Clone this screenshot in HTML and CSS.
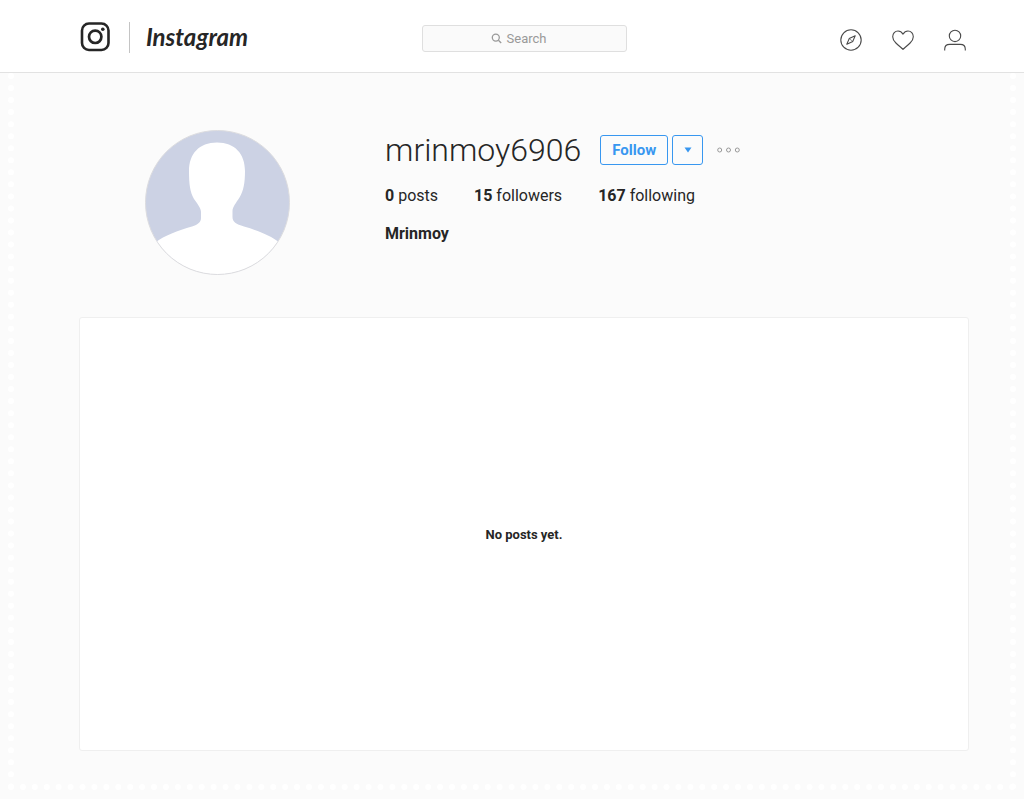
FILE: index.html
```html
<!DOCTYPE html>
<html lang="en">
<head>
    <meta charset="UTF-8">
    <meta name="viewport" content="width=device-width, initial-scale=1.0">
    <title>Mrinmoy (@mrinmoy6906) • Instagram</title>
    <link rel="stylesheet" href="styles.css">
</head>
<body>
    <header class="navbar">
        <a class="brand" href="#">
            <svg class="brand-icon" width="30" height="30" viewBox="0 0 30 30" fill="none" stroke="#262626" aria-hidden="true">
                <rect x="2" y="1.5" width="26.5" height="26.5" rx="7" stroke-width="2.6"/>
                <circle cx="15.2" cy="14.8" r="6.2" stroke-width="2.7"/>
                <circle cx="22.8" cy="7.3" r="1.8" fill="#262626" stroke="none"/>
            </svg>
            <span class="brand-divider"></span>
            <span class="wordmark">Instagram</span>
        </a>
        <div class="search">
            <svg class="search-icon" width="11" height="11" viewBox="0 0 11 11" fill="none" stroke="#999" stroke-width="1.3" aria-hidden="true">
                <circle cx="4.8" cy="4.6" r="3.5"/>
                <path d="M7.4 7.2L10.2 10"/>
            </svg>
            <input type="text" placeholder="Search" aria-label="Search">
        </div>
        <nav class="nav-links">
            <a href="#" aria-label="Explore">
                <svg width="22" height="22" viewBox="0 0 22 22" fill="none" stroke="#4a4a4a" stroke-linejoin="round">
                    <circle cx="11" cy="11" r="10.2" stroke-width="1.1"/>
                    <path d="M15.2 6.8L12.8 12.4L6.8 15.2L9.2 9.6Z" stroke-width="1.1"/>
                    <path d="M9.2 9.6L12.8 12.4" stroke-width="0.6"/>
                </svg>
            </a>
            <a href="#" aria-label="Activity">
                <svg width="22" height="22" viewBox="0 0 22 22" fill="none" stroke="#4a4a4a" stroke-width="1.1" stroke-linejoin="round">
                    <path d="M11 20.3C9.8 19 6.6 16.7 3.9 14C1.9 12 .7 10.2 .7 7.7C.7 4.5 3 2 6 2C8.3 2 9.9 3.2 11 5.1C12.1 3.2 13.7 2 16 2C19 2 21.3 4.5 21.3 7.7C21.3 10.2 20.1 12 18.1 14C15.4 16.7 12.2 19 11 20.3Z"/>
                </svg>
            </a>
            <a href="#" aria-label="Profile">
                <svg width="22" height="22" viewBox="0 0 22 22" fill="none" stroke="#4a4a4a" stroke-width="1.1">
                    <circle cx="11" cy="6.9" r="5.7"/>
                    <path d="M.7 21.5V20.2C.7 17.2 2.7 15.4 5.7 15.4H16.3C19.3 15.4 21.3 17.2 21.3 20.2V21.5"/>
                </svg>
            </a>
        </nav>
    </header>

    <main class="page">
        <section class="profile">
            <svg class="avatar" width="145" height="145" viewBox="0 0 145 145" role="img" aria-label="Profile picture">
                <defs>
                    <clipPath id="avatar-clip"><circle cx="72.5" cy="72.5" r="72"/></clipPath>
                </defs>
                <g clip-path="url(#avatar-clip)">
                    <rect width="145" height="145" fill="#ccd2e4"/>
                    <path fill="#fff" d="M72 12.5C54 12.5 44 24 44 41C44 54 45 62 49 69C52.5 74 56 78 56 82V88C56 92 53 94.5 47 96.5C33 100.5 19 106 11 112V145H134V112C126 106 113 100.5 99 96.5C91 94 87.5 92 87.5 87V81C87.5 77 91 73 94.5 67.5C98.5 61 100 53 100 41C100 24 90 12.5 72 12.5Z"/>
                </g>
                <circle cx="72.5" cy="72.5" r="72" fill="none" stroke="#dcdcdf"/>
            </svg>
            <div class="info">
                <div class="user-row">
                    <h1 class="username">mrinmoy6906</h1>
                    <div class="actions">
                        <button class="btn follow">Follow</button>
                        <button class="btn suggest" aria-label="Similar accounts">
                            <svg width="8" height="6" viewBox="0 0 8 6" fill="#3897f0"><path d="M.5 .5H7.5L4 5.5Z"/></svg>
                        </button>
                    </div>
                    <button class="more" aria-label="Options">
                        <svg width="23" height="6" viewBox="0 0 23 6" fill="none" stroke="#999">
                            <circle cx="2.7" cy="3" r="2"/>
                            <circle cx="11.5" cy="3" r="2"/>
                            <circle cx="20.3" cy="3" r="2"/>
                        </svg>
                    </button>
                </div>
                <ul class="stats">
                    <li><strong>0</strong> posts</li>
                    <li><strong>15</strong> followers</li>
                    <li><strong>167</strong> following</li>
                </ul>
                <h2 class="full-name">Mrinmoy</h2>
            </div>
        </section>

        <section class="posts">
            <p>No posts yet.</p>
        </section>
    </main>
</body>
</html>
```
FILE: styles.css
```css
* {
    box-sizing: border-box;
}
body {
    margin: 0;
    min-height: 100vh;
    background: #fbfbfb;
    color: #262626;
    font-family: Roboto, "Liberation Sans", sans-serif;
    font-size: 16px;
}
h1, h2, p, ul {
    margin: 0;
    padding: 0;
}
button {
    font-family: inherit;
    cursor: pointer;
}
svg {
    display: block;
}

/* Top bar */
.navbar {
    display: grid;
    grid-template-columns: 1fr 205px 1fr;
    align-items: center;
    height: 73px;
    padding: 4px 56px 0 80px;
    background: #fff;
    border-bottom: 1px solid #e2e2e2;
}
.brand {
    display: flex;
    align-items: center;
    padding-bottom: 2px;
    color: #262626;
    text-decoration: none;
}
.brand-divider {
    width: 1px;
    height: 31px;
    margin: 0 16px 0 19px;
    background: #c4c4c4;
}
.wordmark {
    font-family: Lato, sans-serif;
    font-size: 24px;
    font-style: italic;
    font-weight: bold;
    line-height: 30px;
}
.search {
    position: relative;
}
.search input {
    display: block;
    width: 100%;
    height: 27px;
    padding: 0 0 0 5px;
    border: 1px solid #dfdfdf;
    border-radius: 3px;
    background: #fafafa;
    color: #262626;
    font-family: inherit;
    font-size: 13px;
    text-align: center;
}
.search input::placeholder {
    color: #999;
}
.search-icon {
    position: absolute;
    top: 8px;
    left: 69px;
}
.nav-links {
    display: flex;
    justify-content: flex-end;
    gap: 30px;
    padding: 3px 2px 0 0;
}

/* Profile */
.page {
    margin: 0 8px;
    padding: 57px 41px 33px 65px;
    border: 6px dotted #fff;
    border-top: 0;
}
.profile {
    display: grid;
    grid-template-columns: 276px 1fr;
    gap: 30px;
    margin-bottom: 42px;
}
.avatar {
    justify-self: center;
}
.user-row {
    display: flex;
    align-items: center;
    height: 40px;
}
.username {
    margin-right: 19px;
    font-size: 32px;
    font-weight: 300;
    line-height: 40px;
}
.actions {
    display: flex;
    gap: 4px;
}
.btn {
    display: flex;
    align-items: center;
    justify-content: center;
    height: 30px;
    padding: 0;
    border: 1px solid #3897f0;
    border-radius: 3px;
    background: transparent;
    color: #3897f0;
    font-size: 15px;
    font-weight: bold;
}
.follow {
    width: 68px;
}
.suggest {
    width: 31px;
}
.more {
    margin-left: 14px;
    padding: 0;
    border: 0;
    background: none;
}
.stats {
    display: flex;
    gap: 36px;
    margin-top: 16px;
    line-height: 20px;
    list-style: none;
}
.full-name {
    margin-top: 18px;
    font-size: 16px;
    line-height: 20px;
}

/* Posts */
.posts {
    display: flex;
    align-items: center;
    justify-content: center;
    min-height: 434px;
    border: 1px solid #efefef;
    border-radius: 3px;
    background: #fff;
    font-size: 13px;
    font-weight: bold;
}
```
